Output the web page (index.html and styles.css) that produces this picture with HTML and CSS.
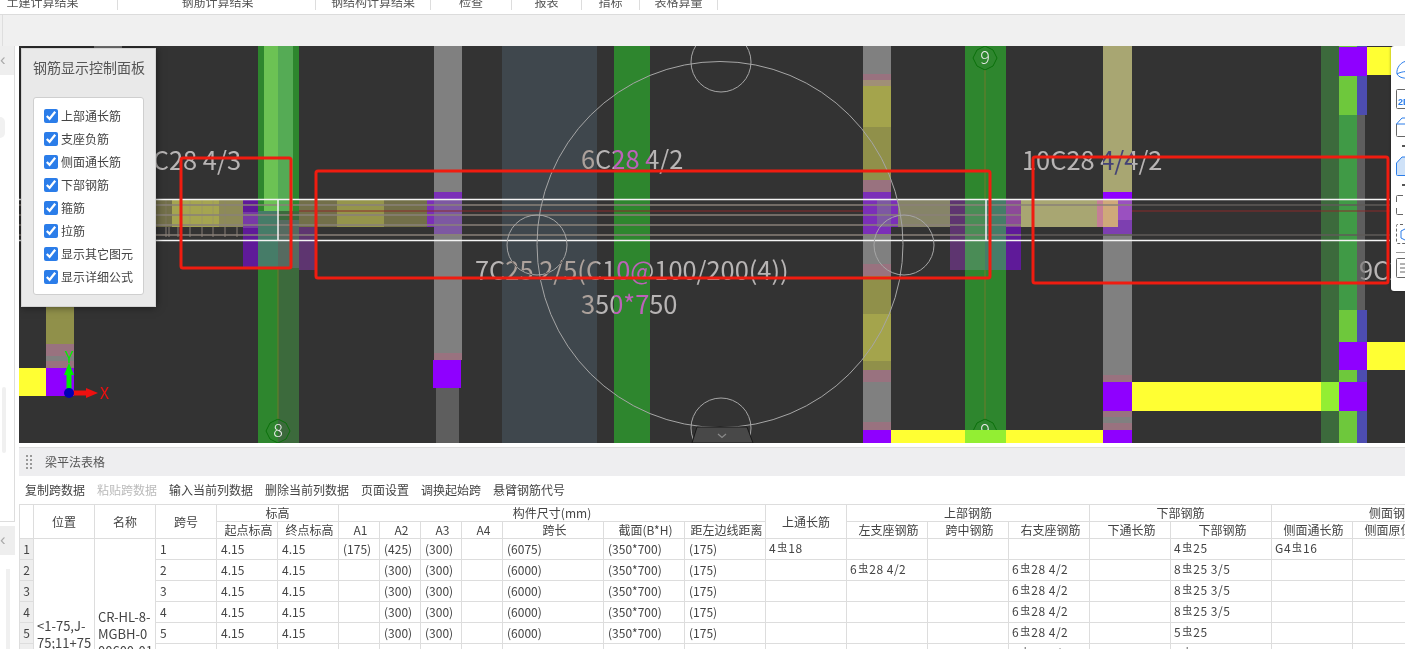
FILE: index.html
```html
<!DOCTYPE html>
<html lang="zh-CN">
<head>
<meta charset="utf-8">
<title>钢筋计算结果</title>
<link rel="stylesheet" href="styles.css">
</head>
<body>
<header class="tabs">
  <div class="tab tab-a">土建计算结果</div>
  <div class="tab tab-b">钢筋计算结果</div>
  <div class="tab tab-c">钢结构计算结果</div>
  <div class="tab tab-d">检查</div>
  <div class="tab tab-e">报表</div>
  <div class="tab tab-f">指标</div>
  <div class="tab tab-g">表格算量</div>
</header>
<div class="ribbon"><span class="ribbon-edge"></span></div>
<div class="workspace">
  <aside class="side">
    <div class="side-top">
      <div class="side-tab">‹</div>
      <div class="side-knob"></div>
      <div class="side-scroll"></div>
    </div>
    <div class="side-bottom">
      <div class="side-tab">‹</div>
      <div class="side-scroll2"></div>
    </div>
  </aside>
  <main class="main">
    <section class="canvas">
      <svg class="cad" viewBox="19 46 1386 397" width="1386" height="397" xmlns="http://www.w3.org/2000/svg">
        <rect x="19" y="46" width="1386" height="397" class="bg"/>

        <!-- left column -->
        <rect x="94" y="46" width="28" height="3" class="gray"/>
        <rect x="46" y="300" width="28" height="44" class="olive2"/>
        <rect x="46" y="344" width="28" height="12" class="pink"/>
        <rect x="46" y="356" width="28" height="5" class="gray"/>
        <rect x="46" y="361" width="28" height="7" class="pink"/>
        <rect x="46" y="368" width="28" height="28" class="violet"/>
        <rect x="19" y="368" width="27" height="28" class="yellow"/>

        <!-- column 8 -->
        <rect x="258" y="46" width="20" height="397" class="green"/>
        <rect x="278" y="46" width="21" height="397" class="green-dim"/>
        <rect x="278" y="46" width="21" height="165" class="green"/>
        <rect x="264" y="46" width="14" height="165" class="lime-soft"/>
        <rect x="278" y="46" width="15" height="165" class="green-soft"/>

        <!-- column gray 1 -->
        <rect x="434" y="46" width="28" height="146" class="gray"/>
        <rect x="434" y="234" width="28" height="119" class="gray"/>
        <rect x="434" y="353" width="28" height="7" class="pink"/>
        <rect x="433" y="360" width="28" height="28" class="violet"/>
        <rect x="436" y="388" width="23" height="55" class="gray-dark"/>

        <!-- wide slab / green column -->
        <rect x="502" y="46" width="95" height="397" class="slate"/>
        <rect x="614" y="46" width="36" height="397" class="green"/>

        <!-- column olive -->
        <rect x="863" y="46" width="28" height="28" class="gray"/>
        <rect x="863" y="74" width="28" height="6" class="pink"/>
        <rect x="863" y="80" width="28" height="6" class="tan"/>
        <rect x="863" y="86" width="28" height="41" class="olive"/>
        <rect x="863" y="127" width="28" height="53" class="olive2"/>
        <rect x="863" y="180" width="28" height="12" class="pink"/>
        <rect x="863" y="192" width="28" height="42" class="purple"/>
        <rect x="863" y="234" width="28" height="30" class="gray"/>
        <rect x="863" y="264" width="28" height="12" class="pink"/>
        <rect x="863" y="276" width="28" height="38" class="olive2"/>
        <rect x="863" y="314" width="28" height="47" class="olive"/>
        <rect x="863" y="361" width="28" height="9" class="olive2"/>
        <rect x="863" y="370" width="28" height="12" class="pink"/>
        <rect x="863" y="382" width="28" height="40" class="gray"/>
        <rect x="863" y="422" width="28" height="8" class="pink"/>
        <rect x="863" y="430" width="28" height="13" class="violet"/>

        <!-- column 9 -->
        <rect x="965" y="46" width="41" height="397" class="green"/>

        <!-- column khaki -->
        <rect x="1103" y="46" width="29" height="146" class="khaki"/>
        <rect x="1103" y="192" width="29" height="8" class="violet"/>
        <rect x="1103" y="234" width="29" height="141" class="gray"/>
        <rect x="1103" y="375" width="29" height="7" class="pink"/>
        <rect x="1103" y="382" width="29" height="29" class="violet"/>
        <rect x="1103" y="411" width="29" height="6" class="pink"/>
        <rect x="1103" y="417" width="29" height="6" class="gray"/>
        <rect x="1103" y="423" width="29" height="7" class="pink"/>
        <rect x="1103" y="430" width="29" height="13" class="violet"/>

        <!-- right group -->
        <rect x="1321" y="46" width="18" height="397" class="green-dim"/>
        <rect x="1339" y="46" width="18" height="397" class="green-mid"/>
        <rect x="1357" y="115" width="8" height="195" class="gray-dark"/>
        <rect x="1339" y="46" width="18" height="2" class="lime"/>
        <rect x="1357" y="46" width="10" height="2" class="indigo"/>
        <rect x="1339" y="47" width="28" height="29" class="violet"/>
        <rect x="1367" y="47" width="25" height="28" class="yellow"/>
        <rect x="1339" y="76" width="18" height="39" class="lime"/>
        <rect x="1357" y="76" width="10" height="39" class="indigo"/>
        <rect x="1339" y="310" width="18" height="32" class="lime"/>
        <rect x="1357" y="310" width="10" height="32" class="indigo"/>
        <rect x="1339" y="342" width="28" height="28" class="violet"/>
        <rect x="1367" y="342" width="38" height="28" class="yellow"/>
        <rect x="1339" y="370" width="18" height="12" class="lime"/>
        <rect x="1357" y="370" width="10" height="12" class="indigo"/>
        <rect x="1339" y="411" width="18" height="32" class="lime"/>
        <rect x="1357" y="411" width="10" height="32" class="indigo"/>

        <!-- yellow beams -->
        <rect x="1132" y="382" width="189" height="29" class="yellow"/>
        <rect x="1321" y="382" width="18" height="29" class="chartreuse"/>
        <rect x="1339" y="382" width="28" height="29" class="violet"/>

        <!-- axis bubbles -->
        <polygon points="985,46 993,50 997,58 993,66 985,70 977,66 973,58 977,50" class="bubble"/>
        <polygon points="278,419 286,423 290,431 286,439 278,443 270,439 266,431 270,423" class="bubble"/>
        <polygon points="985,419 993,423 997,431 993,439 985,443 977,439 973,431 977,423" class="bubble"/>
        <line x1="985" y1="70" x2="985" y2="419" class="axis-line"/>
        <line x1="278" y1="268" x2="278" y2="419" class="axis-line"/>
        <text x="985" y="64" class="bubble-text">9</text>
        <text x="278" y="437" class="bubble-text">8</text>
        <text x="985" y="437" class="bubble-text">9</text>

        <rect x="891" y="430" width="74" height="13" class="yellow"/>
        <rect x="965" y="430" width="41" height="13" class="chartreuse"/>
        <rect x="1006" y="430" width="97" height="13" class="yellow"/>

        <!-- beam band, left part -->
        <rect x="156" y="200" width="16" height="27" class="olive-low"/>
        <rect x="172" y="200" width="47" height="27" class="olive3"/>
        <rect x="219" y="200" width="24" height="27" class="olive4"/>
        <rect x="243" y="200" width="15" height="68" class="purple-deep"/>
        <rect x="243" y="212" width="15" height="16" class="purple-mid"/>
        <rect x="258" y="211" width="20" height="57" class="teal"/>
        <rect x="278" y="220" width="21" height="48" class="teal2"/>
        <rect x="299" y="200" width="16" height="70" class="purple-dim"/>
        <rect x="299" y="200" width="38" height="27" class="olive-low"/>
        <rect x="337" y="200" width="47" height="27" class="olive5"/>
        <rect x="384" y="200" width="43" height="27" class="olive-low"/>
        <rect x="427" y="200" width="7" height="27" class="purple"/>
        <rect x="434" y="192" width="28" height="8" class="purple"/>
        <rect x="434" y="200" width="28" height="34" class="purple-soft"/>
        <rect x="877" y="200" width="14" height="27" class="purple-soft"/>
        <rect x="891" y="200" width="7" height="27" class="purple"/>
        <rect x="898" y="200" width="52" height="27" class="olive-gray"/>
        <rect x="950" y="200" width="15" height="70" class="purple-dim"/>
        <rect x="965" y="200" width="20" height="70" class="teal3"/>
        <rect x="985" y="200" width="21" height="70" class="teal"/>
        <rect x="1006" y="200" width="15" height="70" class="purple-deep"/>
        <rect x="1006" y="200" width="15" height="27" class="purple-pale"/>
        <rect x="1021" y="200" width="76" height="27" class="khaki"/>
        <rect x="1097" y="200" width="21" height="27" class="rose"/>
        <rect x="1103" y="200" width="15" height="27" class="peach"/>
        <rect x="1118" y="200" width="14" height="20" class="purple-pale2"/>
        <rect x="1118" y="220" width="14" height="14" class="purple-soft2"/>
        <rect x="1103" y="227" width="15" height="7" class="purple-soft2"/>

        <!-- ties -->
        <g class="ties">
          <line x1="166" y1="227" x2="166" y2="237"/><line x1="169" y1="227" x2="169" y2="237"/>
          <line x1="178" y1="227" x2="178" y2="237"/><line x1="190" y1="227" x2="190" y2="237"/>
          <line x1="202" y1="227" x2="202" y2="237"/><line x1="213" y1="227" x2="213" y2="237"/>
          <line x1="225" y1="227" x2="225" y2="237"/><line x1="237" y1="227" x2="237" y2="237"/>
        </g>
        <g class="ties-faint">
          <line x1="166" y1="200" x2="166" y2="227"/><line x1="190" y1="200" x2="190" y2="227"/>
          <line x1="202" y1="200" x2="202" y2="227"/><line x1="213" y1="200" x2="213" y2="227"/>
          <line x1="225" y1="200" x2="225" y2="227"/>
        </g>

        <!-- longitudinal bars -->
        <g class="bars">
          <line x1="19" y1="205" x2="1132" y2="205"/>
          <line x1="19" y1="215" x2="1021" y2="215"/>
          <line x1="19" y1="225" x2="1021" y2="225"/>
          <line x1="19" y1="235" x2="1021" y2="235"/>
        </g>
        <g class="bars-dim">
          <line x1="1132" y1="205" x2="1390" y2="205"/>
          <line x1="1021" y1="235" x2="1390" y2="235"/>
        </g>
        <line x1="299" y1="211" x2="863" y2="211" class="red-thin"/>
        <line x1="1132" y1="211" x2="1390" y2="211" class="red-thin"/>
        <g class="white-lines">
          <line x1="19" y1="199.5" x2="1390" y2="199.5"/>
          <line x1="19" y1="240.5" x2="1390" y2="240.5"/>
          <line x1="278" y1="199" x2="278" y2="241"/>
          <line x1="986" y1="199" x2="986" y2="241"/>
        </g>

        <!-- circles -->
        <g class="circles">
          <circle cx="720" cy="244.5" r="183"/>
          <circle cx="721" cy="62" r="30"/>
          <circle cx="721" cy="428" r="30"/>
          <circle cx="537" cy="245" r="30"/>
          <circle cx="904" cy="245" r="30"/>
        </g>

        <!-- labels -->
        <g class="labels">
          <text x="241" y="170" class="end">7C28 4/3</text>
          <text x="581" y="169">6C28 4/2</text>
          <text x="1022" y="170">10C28 4/4/2</text>
          <text x="475" y="280">7C25 2/5(C10@100/200(4))</text>
          <text x="581" y="314">350*750</text>
          <text x="1359" y="280">9C28</text>
        </g>

        <!-- selection rectangles -->
        <g class="marks">
          <rect x="181" y="158" width="110" height="110" rx="2"/>
          <rect x="316" y="171" width="674" height="107" rx="2"/>
          <rect x="1033" y="157" width="355" height="126" rx="2"/>
        </g>

        <!-- collapse tab -->
        <polygon points="692,443 697,427 747,427 753,443" class="collapse"/>
        <polyline points="718,434 722,437.500 726,434" class="chev"/>

        <!-- origin gizmo -->
        <text x="69" y="363" class="gizmo-y">Y</text>
        <line x1="69" y1="393" x2="69" y2="374" class="gizmo-g"/>
        <polygon points="64,375 69,363 74,375" class="fill-g"/>
        <line x1="69" y1="393" x2="87" y2="393" class="gizmo-r"/>
        <polygon points="86,388 98,393 86,398" class="fill-r"/>
        <circle cx="69" cy="393" r="5" class="fill-b"/>
        <text x="100" y="399" class="gizmo-x">X</text>
      </svg>

      <div class="control">
        <h2 class="control-title">钢筋显示控制面板</h2>
        <div class="control-box">
          <label class="check"><input type="checkbox" checked>上部通长筋</label>
          <label class="check"><input type="checkbox" checked>支座负筋</label>
          <label class="check"><input type="checkbox" checked>侧面通长筋</label>
          <label class="check"><input type="checkbox" checked>下部钢筋</label>
          <label class="check"><input type="checkbox" checked>箍筋</label>
          <label class="check"><input type="checkbox" checked>拉筋</label>
          <label class="check"><input type="checkbox" checked>显示其它图元</label>
          <label class="check"><input type="checkbox" checked>显示详细公式</label>
        </div>
      </div>

      <div class="viewbar">
        <svg class="vb-icon vb-sphere" width="22" height="20" viewBox="0 0 22 20"><path d="M1 14C0 8 5 1 12 1h10M1 14c3 5 10 5 21 3M1 14c5-3 12-3 21-2" class="ic-blue"/></svg>
        <svg class="vb-icon vb-2d" width="22" height="20" viewBox="0 0 22 20"><path d="M22 .500H1.500a1 1 0 0 0-1 1v17a1 1 0 0 0 1 1H22" class="ic-dark"/><text x="2" y="16" class="ic-text">2D</text></svg>
        <svg class="vb-icon vb-cube" width="22" height="20" viewBox="0 0 22 20"><path d="M22 19.500H1.500a1 1 0 0 1-1-1V7" class="ic-dark"/><path d="M.5 7 6 1h16M.5 7H22" class="ic-blue"/></svg>
        <span class="vb-tick"></span>
        <svg class="vb-icon vb-cube2" width="22" height="20" viewBox="0 0 22 20"><path d="M22 19.500H1.500a1 1 0 0 1-1-1V7L6 1h16z" class="ic-fill"/></svg>
        <span class="vb-tick"></span>
        <svg class="vb-icon vb-box" width="22" height="20" viewBox="0 0 22 20"><path d="M7 .500H1.500a1 1 0 0 0-1 1V7M.5 13v5.500a1 1 0 0 0 1 1H7" class="ic-dark"/></svg>
        <svg class="vb-icon vb-dash" width="22" height="20" viewBox="0 0 22 20"><path d="M22 .500H1.500a1 1 0 0 0-1 1v17a1 1 0 0 0 1 1H22" class="ic-dash"/><path d="M5 7l6-3 8 3v7l-8 3-6-3z" class="ic-blue"/></svg>
        <span class="vb-rule"></span>
        <svg class="vb-icon vb-list" width="22" height="20" viewBox="0 0 22 20"><path d="M22 .500H1.500a1 1 0 0 0-1 1v17a1 1 0 0 0 1 1H22M4 6h5M11 6h9M4 10h5M11 10h9M4 14h5M11 14h9" class="ic-dark"/></svg>
      </div>
    </section>

    <section class="panel">
      <div class="panel-head">
        <span class="grip"><i></i><i></i><i></i><i></i><i></i><i></i><i></i><i></i></span>
        <span class="panel-title">梁平法表格</span>
      </div>
      <div class="panel-tools">
        <span>复制跨数据</span>
        <span class="disabled">粘贴跨数据</span>
        <span>输入当前列数据</span>
        <span>删除当前列数据</span>
        <span>页面设置</span>
        <span>调换起始跨</span>
        <span>悬臂钢筋代号</span>
      </div>
      <div class="grid-wrap">
        <table class="grid">
          <colgroup>
            <col class="c14"><col class="c61"><col class="c61"><col class="c61"><col class="c61"><col class="c61">
            <col class="c41"><col class="c41"><col class="c41"><col class="c41"><col class="c101"><col class="c81"><col class="c81">
            <col class="c81"><col class="c81"><col class="c81"><col class="c81"><col class="c81"><col class="c101">
            <col class="c81"><col class="c81"><col class="c81">
          </colgroup>
          <thead>
            <tr>
              <th rowspan="2"></th><th rowspan="2">位置</th><th rowspan="2">名称</th><th rowspan="2">跨号</th>
              <th colspan="2">标高</th><th colspan="7">构件尺寸(mm)</th><th rowspan="2">上通长筋</th>
              <th colspan="3">上部钢筋</th><th colspan="2">下部钢筋</th><th colspan="3">侧面钢筋</th>
            </tr>
            <tr>
              <th>起点标高</th><th>终点标高</th><th>A1</th><th>A2</th><th>A3</th><th>A4</th><th>跨长</th><th>截面(B*H)</th><th>距左边线距离</th>
              <th>左支座钢筋</th><th>跨中钢筋</th><th>右支座钢筋</th><th>下通长筋</th><th>下部钢筋</th><th>侧面通长筋</th><th>侧面原位筋</th><th></th>
            </tr>
          </thead>
          <tbody>
            <tr>
              <td class="num">1</td>
              <td rowspan="10" class="merged merged-pos">&lt;1-75,J-<br>75;11+75<br>0,J-75&gt;</td>
              <td rowspan="10" class="merged">CR-HL-8-<br>MGBH-0<br>00600-01<br>(350*700)</td>
              <td>1</td><td>4.15</td><td>4.15</td><td>(175)</td><td>(425)</td><td>(300)</td><td></td><td>(6075)</td><td>(350*700)</td><td>(175)</td>
              <td class="bar">4<b>虫</b>18</td><td></td><td></td><td></td><td></td><td class="bar">4<b>虫</b>25</td><td class="bar">G4<b>虫</b>16</td><td></td><td></td>
            </tr>
            <tr>
              <td class="num">2</td><td>2</td><td>4.15</td><td>4.15</td><td></td><td>(300)</td><td>(300)</td><td></td><td>(6000)</td><td>(350*700)</td><td>(175)</td>
              <td></td><td class="bar">6<b>虫</b>28 4/2</td><td></td><td class="bar">6<b>虫</b>28 4/2</td><td></td><td class="bar">8<b>虫</b>25 3/5</td><td></td><td></td><td></td>
            </tr>
            <tr>
              <td class="num">3</td><td>3</td><td>4.15</td><td>4.15</td><td></td><td>(300)</td><td>(300)</td><td></td><td>(6000)</td><td>(350*700)</td><td>(175)</td>
              <td></td><td></td><td></td><td class="bar">6<b>虫</b>28 4/2</td><td></td><td class="bar">8<b>虫</b>25 3/5</td><td></td><td></td><td></td>
            </tr>
            <tr>
              <td class="num">4</td><td>4</td><td>4.15</td><td>4.15</td><td></td><td>(300)</td><td>(300)</td><td></td><td>(6000)</td><td>(350*700)</td><td>(175)</td>
              <td></td><td></td><td></td><td class="bar">6<b>虫</b>28 4/2</td><td></td><td class="bar">8<b>虫</b>25 3/5</td><td></td><td></td><td></td>
            </tr>
            <tr>
              <td class="num">5</td><td>5</td><td>4.15</td><td>4.15</td><td></td><td>(300)</td><td>(300)</td><td></td><td>(6000)</td><td>(350*700)</td><td>(175)</td>
              <td></td><td></td><td></td><td class="bar">6<b>虫</b>28 4/2</td><td></td><td class="bar">5<b>虫</b>25</td><td></td><td></td><td></td>
            </tr>
            <tr>
              <td class="num">6</td><td>6</td><td>4.15</td><td>4.15</td><td></td><td>(300)</td><td>(300)</td><td></td><td>(6000)</td><td>(350*700)</td><td>(175)</td>
              <td></td><td></td><td></td><td class="bar">6<b>虫</b>28 4/2</td><td></td><td class="bar">5<b>虫</b>25</td><td></td><td></td><td></td>
            </tr>
            <tr class="spare"><td class="num">7</td><td></td><td></td><td></td><td></td><td></td><td></td><td></td><td></td><td></td><td></td><td></td><td></td><td></td><td></td><td></td><td></td><td></td><td></td><td></td></tr>
            <tr class="spare"><td class="num">8</td><td></td><td></td><td></td><td></td><td></td><td></td><td></td><td></td><td></td><td></td><td></td><td></td><td></td><td></td><td></td><td></td><td></td><td></td><td></td></tr>
            <tr class="spare"><td class="num">9</td><td></td><td></td><td></td><td></td><td></td><td></td><td></td><td></td><td></td><td></td><td></td><td></td><td></td><td></td><td></td><td></td><td></td><td></td><td></td></tr>
            <tr class="spare"><td class="num">10</td><td></td><td></td><td></td><td></td><td></td><td></td><td></td><td></td><td></td><td></td><td></td><td></td><td></td><td></td><td></td><td></td><td></td><td></td><td></td></tr>
          </tbody>
        </table>
      </div>
    </section>
  </main>
</div>
</body>
</html>
```
FILE: styles.css
```css
* { box-sizing: border-box; }
html, body { margin: 0; padding: 0; height: 100%; overflow: hidden; }
body {
  width: 1405px;
  height: 649px;
  display: flex;
  flex-direction: column;
  background: #fff;
  color: #444;
  font: 12px/14px "Noto Sans CJK SC", "Liberation Sans", sans-serif;
}

/* top tabs */
.tabs {
  height: 15px;
  flex: none;
  display: flex;
  align-items: flex-start;
  border-bottom: 1px solid #dcdcdc;
  overflow: hidden;
}
.tab {
  height: 10px;
  line-height: 4px;
  text-align: center;
  border-right: 1px solid #ddd;
  color: #555;
}
.tab-a { width: 118px; padding-right: 32px; }
.tab-b { width: 198px; padding-left: 2px; }
.tab-c { width: 115px; }
.tab-d { width: 81px; }
.tab-e { width: 70px; }
.tab-f { width: 58px; }
.tab-g { width: 78px; }

.ribbon { height: 31px; flex: none; background: #f0f0f0; }
.ribbon-edge { display: block; width: 1px; height: 31px; margin-left: 2px; background: #dedede; }

.workspace { flex: 1; display: flex; min-height: 0; }

/* left strip */
.side { width: 19px; flex: none; display: flex; flex-direction: column; }
.side-top {
  width: 15px;
  height: 482px;
  border-right: 1px solid #ddd;
  border-bottom: 1px solid #ddd;
  overflow: hidden;
}
.side-tab {
  height: 29px;
  background: #eeeeee;
  color: #aaa;
  font: 17px/28px "Liberation Sans", sans-serif;
}
.side-knob { width: 5px; height: 21px; margin-top: 42px; border-radius: 0 11px 11px 0; background: #f1f1f1; }
.side-scroll { width: 4px; height: 66px; margin: 249px 0 0 2px; border-radius: 2px; background: #f0f0f0; }
.side-bottom { width: 15px; margin-top: 4px; }
.side-scroll2 { width: 4px; height: 80px; margin: 14px 0 0 6px; background: #f0f0f0; }

.main { width: 1386px; flex: none; display: flex; flex-direction: column; }

/* canvas */
.canvas { height: 397px; flex: none; position: relative; overflow: hidden; }
.cad { display: block; }
.bg { fill: #333333; }
.gray { fill: #808080; }
.gray-dark { fill: #5e5e5e; }
.pink { fill: #99727f; }
.tan { fill: #a08f76; }
.olive { fill: #a4a44c; }
.olive2 { fill: #90904a; }
.olive3 { fill: #a5a550; }
.olive4 { fill: #8d8a58; }
.olive5 { fill: #95954b; }
.olive-low { fill: #726f49; }
.olive-gray { fill: #868468; }
.khaki { fill: #a8a672; }
.violet { fill: #8f00ff; }
.yellow { fill: #ffff33; }
.chartreuse { fill: #93ee33; }
.green { fill: #2e862e; }
.green-dim { fill: #3c6a3c; }
.green-mid { fill: #409a46; }
.green-soft { fill: #55ab55; }
.lime-soft { fill: #6cc254; }
.lime { fill: #6ec83c; }
.indigo { fill: #4d4db0; }
.slate { fill: #3f474d; }
.purple { fill: #7b2fb8; }
.purple-deep { fill: #5f1a99; }
.purple-mid { fill: #773aa6; }
.purple-dim { fill: #5e3570; }
.purple-soft { fill: #7d58a2; }
.purple-soft2 { fill: #7d3fb0; }
.purple-pale { fill: #8c4a98; }
.purple-pale2 { fill: #9a50c0; }
.teal { fill: #467c68; }
.teal2 { fill: #566a60; }
.teal3 { fill: #4a8c56; }
.rose { fill: #c57f96; }
.peach { fill: #cfa97a; }
.bubble { fill: none; stroke: #0a700a; stroke-width: 1; }
.axis-line { stroke: #6f7a2a; stroke-width: 1; }
.bubble-text {
  fill: #e8e8e8;
  font: 300 18px "Noto Sans CJK SC", sans-serif;
  text-anchor: middle;
}
.ties line { stroke: #8a8078; stroke-width: 1; }
.ties-faint line { stroke: #8a8078; stroke-width: 1; opacity: .35; }
.bars line { stroke: #8a8078; stroke-width: 1.5; }
.bars-dim line { stroke: #5f5b58; stroke-width: 1.5; }
.red-thin { stroke: #8a2a2a; stroke-width: 1; }
.white-lines line { stroke: #f4f4f4; stroke-width: 1.5; }
.circles circle { fill: none; stroke: #a6a6a6; stroke-width: 1; }
.labels text {
  fill: #ebe8e8;
  font: 400 25.4px "Noto Sans CJK SC", sans-serif;
  mix-blend-mode: difference;
}
.labels .end { text-anchor: end; }
.marks rect { fill: none; stroke: #f01c10; stroke-width: 3; }
.collapse { fill: #484848; stroke: #1a1a1a; stroke-width: 1; }
.chev { fill: none; stroke: #8a8a8a; stroke-width: 1.2; }
.gizmo-g { stroke: #00ee00; stroke-width: 5; }
.gizmo-r { stroke: #ee1010; stroke-width: 5; }
.fill-g { fill: #00ee00; }
.fill-r { fill: #ee1010; }
.fill-b { fill: #0000b4; }
.gizmo-y { fill: #00ee00; font: 16px "Noto Sans CJK SC", sans-serif; text-anchor: middle; }
.gizmo-x { fill: #ee1010; font: 16px "Noto Sans CJK SC", sans-serif; }

/* control panel overlay */
.control {
  position: absolute;
  left: 2px;
  top: 2px;
  width: 135px;
  height: 259px;
  padding: 8px 11px 0;
  background: #e9e9e9;
  border: 1px solid #d4d4d4;
  box-shadow: 0 0 8px rgba(0, 0, 0, .55);
}
.control-title {
  margin: 0 0 20px;
  font-size: 14px;
  line-height: 20px;
  font-weight: 400;
  color: #555;
  white-space: nowrap;
}
.control-box {
  width: 111px;
  height: 198px;
  padding: 6px 0 0 10px;
  background: #fff;
  border: 1px solid #cfcfcf;
  border-radius: 3px;
}
.check {
  display: flex;
  align-items: center;
  gap: 3px;
  height: 23px;
  white-space: nowrap;
  color: #444;
}
.check input {
  width: 14px;
  height: 14px;
  margin: 0;
  accent-color: #2b7de9;
  flex: none;
}

/* right view bar overlay */
.viewbar {
  position: absolute;
  right: 0;
  top: 0;
  width: 14px;
  height: 245px;
  padding: 14px 0 0 5px;
  display: flex;
  flex-direction: column;
  background: #fff;
  border-radius: 3px 0 0 3px;
  box-shadow: 0 0 3px rgba(0, 0, 0, .4);
  overflow: hidden;
}
.vb-icon { display: block; flex: none; }
.vb-2d { margin-top: 9px; }
.vb-cube { margin-top: 8px; }
.vb-cube2 { margin-top: 9px; }
.vb-box { margin-top: 9px; }
.vb-dash { margin-top: 9px; }
.vb-list { margin-top: 5px; }
.vb-tick { display: block; width: 3px; height: 2px; margin: 8px 0 0 6px; background: #555; flex: none; }
.vb-rule { display: block; height: 1px; margin-top: 8px; background: #999; flex: none; }
.ic-blue { fill: none; stroke: #2b7de9; stroke-width: 1; }
.ic-dark { fill: none; stroke: #666; stroke-width: 1; }
.ic-dash { fill: none; stroke: #666; stroke-width: 1; stroke-dasharray: 3 2; }
.ic-fill { fill: #cfe2f8; stroke: #2b7de9; stroke-width: 1; }
.ic-text { fill: #2b7de9; font: bold 9px "Liberation Sans", sans-serif; }

/* table panel */
.panel { margin-top: 4px; flex: 1; min-height: 0; overflow: hidden; border-top: 1px solid #ddd; }
.panel-head {
  height: 28px;
  display: flex;
  align-items: center;
  padding-left: 7px;
  background: #eeeef0;
}
.grip { width: 6px; display: grid; grid-template-columns: 2px 2px; gap: 2px; }
.grip i { display: block; width: 2px; height: 2px; background: #999; }
.panel-title { margin-left: 13px; color: #555; }
.panel-tools {
  height: 28px;
  display: flex;
  align-items: center;
  gap: 12px;
  padding-left: 6px;
  white-space: nowrap;
}
.disabled { color: #bbb; }
.grid-wrap { width: 1386px; overflow: hidden; }
.grid {
  width: 1472px;
  table-layout: fixed;
  border-collapse: collapse;
  border: 1px solid #ddd;
  margin-left: 0;
}
.c14 { width: 14px; }
.c41 { width: 41px; }
.c61 { width: 61px; }
.c81 { width: 81px; }
.c101 { width: 101px; }
.grid th, .grid td {
  border: 1px solid #ddd;
  padding: 0 3px 0 4px;
  overflow: hidden;
  white-space: nowrap;
  line-height: 14px;
}
.grid th { height: 17px; font-weight: 400; text-align: center; padding: 0; color: #444; }
.grid thead tr:nth-child(2) th { padding-left: 3px; }
.grid td { height: 21px; }
.grid .num { padding: 0; text-align: center; background: #eeeeee; }
.grid .merged { padding: 0 0 4px 3px; font-size: 13px; line-height: 17px; vertical-align: middle; }
.grid .merged-pos { padding-bottom: 2px; }
.grid .bar { padding: 0 0 2px 3px; letter-spacing: .5px; }
.grid .bar b { font-weight: 400; font-size: 10px; position: relative; top: -2px; margin: 0 1px; letter-spacing: 0; }
```
